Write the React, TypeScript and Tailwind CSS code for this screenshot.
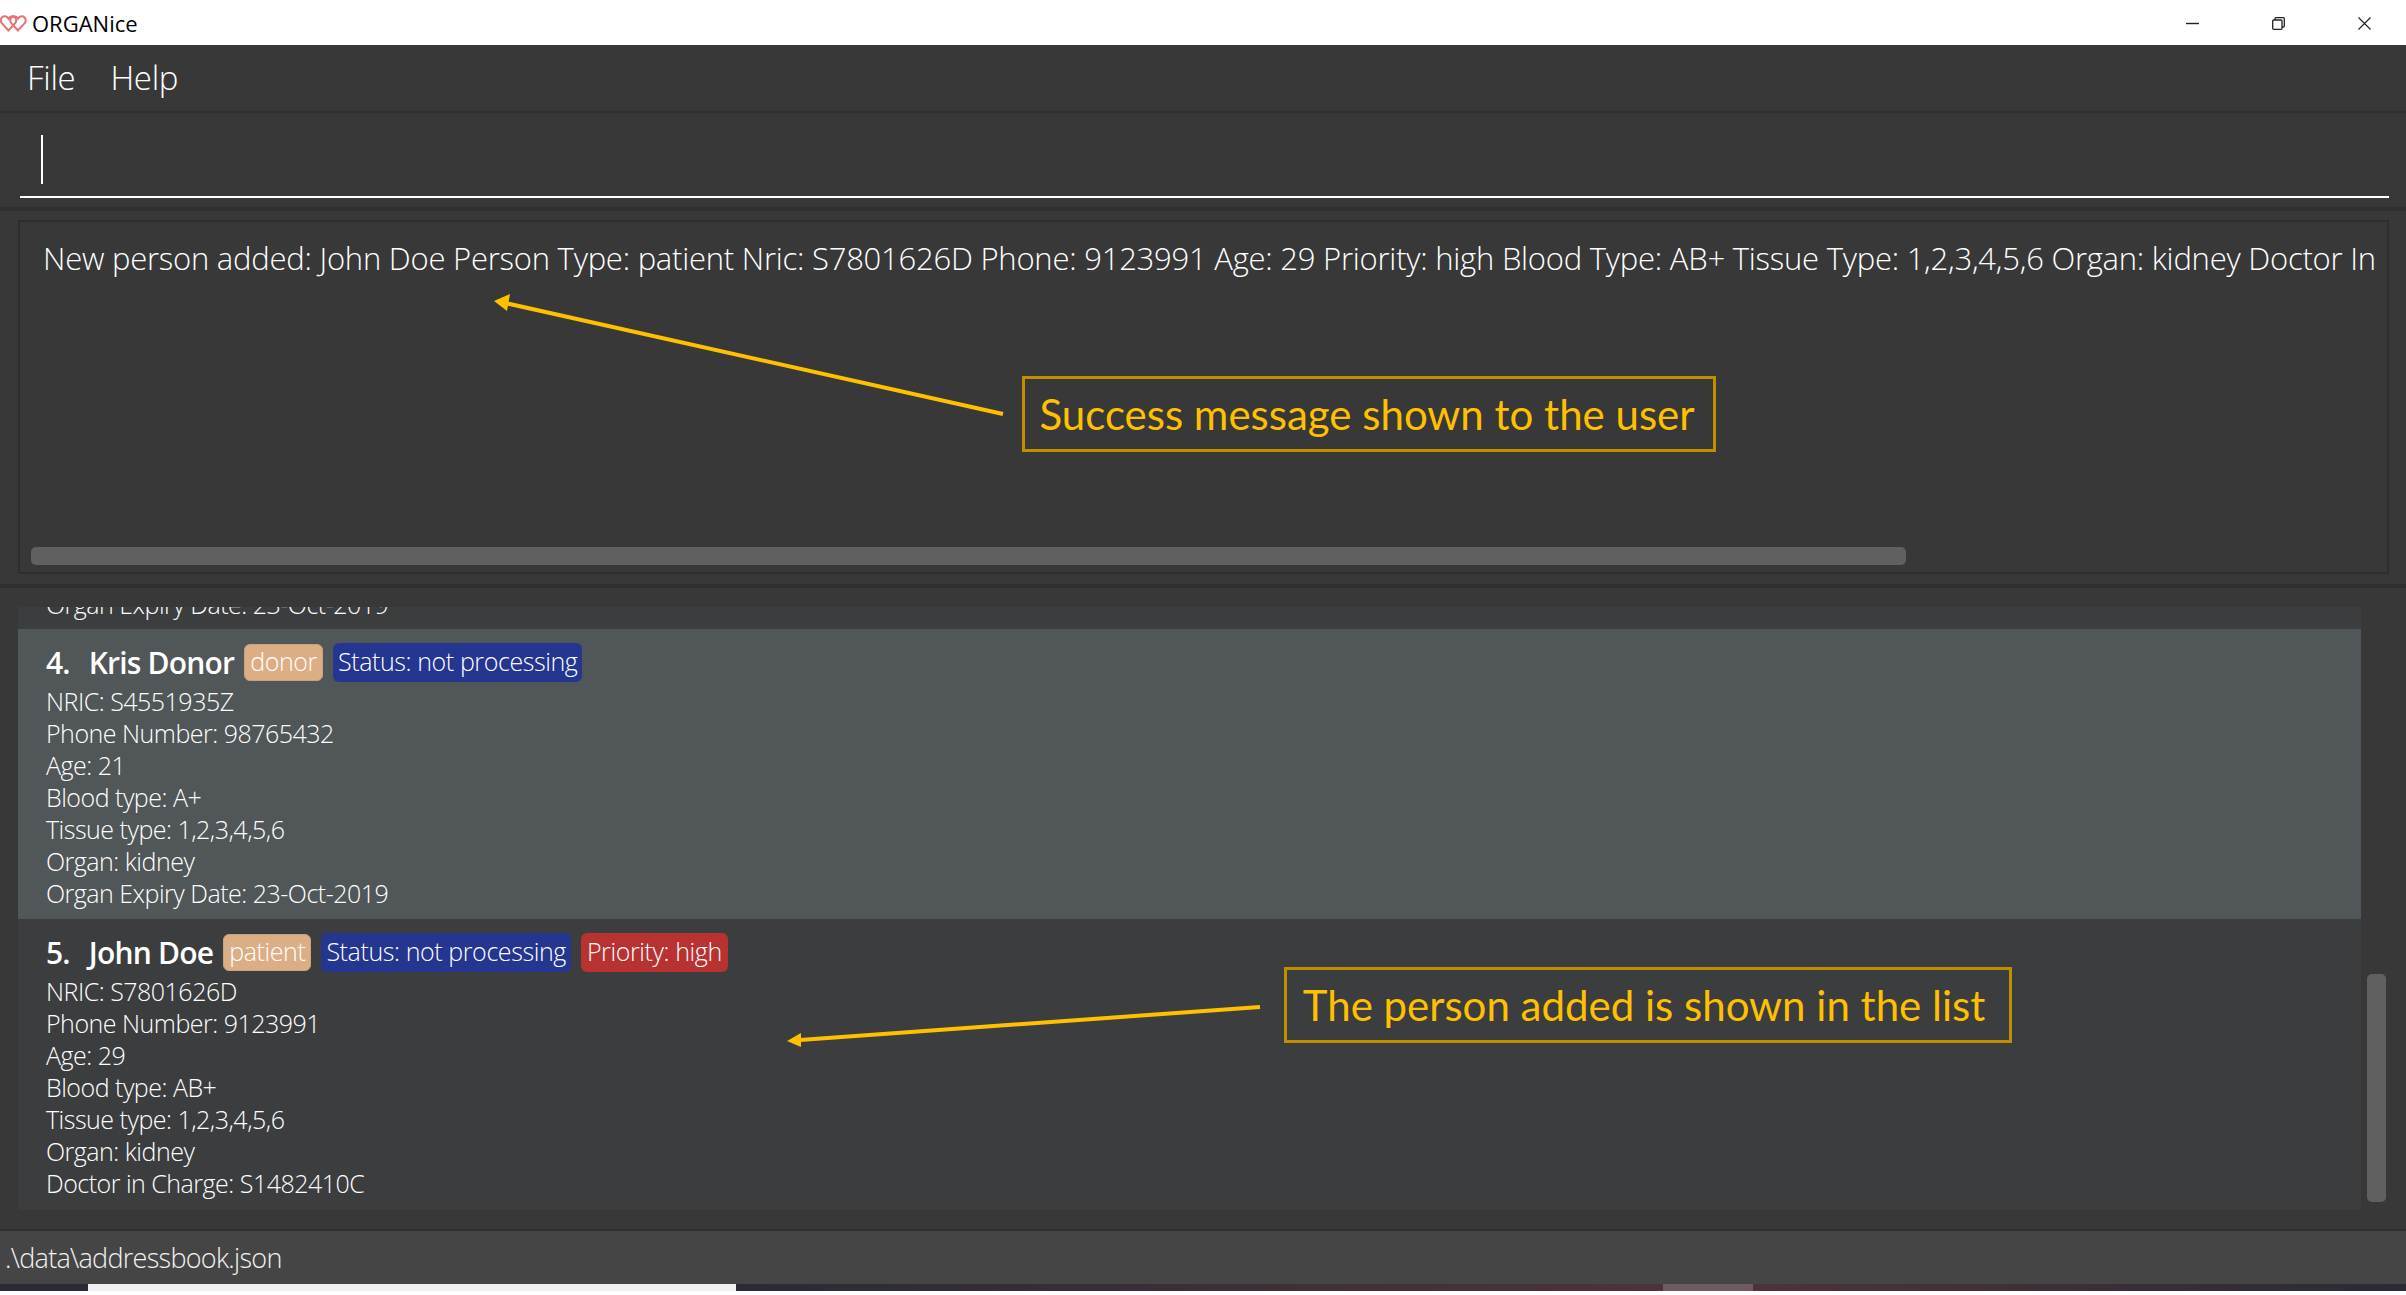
const uiFont = "font-['Open_Sans',sans-serif]"

type Person = {
  index: number
  name: string
  type: string
  priority?: string
  details: string[]
  selected?: boolean
}

const people: Person[] = [
  {
    index: 4,
    name: 'Kris Donor',
    type: 'donor',
    selected: true,
    details: [
      'NRIC: S4551935Z',
      'Phone Number: 98765432',
      'Age: 21',
      'Blood type: A+',
      'Tissue type: 1,2,3,4,5,6',
      'Organ: kidney',
      'Organ Expiry Date: 23-Oct-2019',
    ],
  },
  {
    index: 5,
    name: 'John Doe',
    type: 'patient',
    priority: 'Priority: high',
    details: [
      'NRIC: S7801626D',
      'Phone Number: 9123991',
      'Age: 29',
      'Blood type: AB+',
      'Tissue type: 1,2,3,4,5,6',
      'Organ: kidney',
      'Doctor in Charge: S1482410C',
    ],
  },
]

function Hearts() {
  return (
    <svg width="27" height="17" viewBox="0 0 27 17" fill="none" stroke="#e57373" strokeWidth="2" className="mt-[2px] shrink-0">
      <path d="M8.5 15.5 1.8 8.2C-.2 5.8 1 1.5 4.6 1.3c1.8-.1 3.1.9 3.9 2.4.8-1.5 2.100-2.500 3.900-2.400 3.600.2 4.800 4.500 2.800 6.900z" />
      <path d="M18 15.500 11.300 8.200C9.300 5.800 10.500 1.500 14.100 1.300c1.800-.1 3.100.9 3.900 2.400.8-1.500 2.100-2.500 3.900-2.400 3.600.2 4.800 4.500 2.800 6.900z" />
    </svg>
  )
}

function TitleBar() {
  return (
    <div className="flex h-[45px] shrink-0 items-center bg-white text-black">
      <Hearts />
      <span className="ml-[5px] pt-[2px] font-['Open_Sans',sans-serif] text-[22px]">ORGANice</span>
      <div className="ml-auto flex items-center pr-[35px] pt-[1px]">
        <svg width="13" height="13" viewBox="0 0 13 13" stroke="#222" strokeWidth="1.4" fill="none">
          <path d="M0 6.500h13" />
        </svg>
        <svg width="13" height="13" viewBox="0 0 13 13" stroke="#222" strokeWidth="1.3" fill="none" className="ml-[73px]">
          <rect x="0.700" y="3" width="9.300" height="9.300" rx="1" />
          <path d="M3 3V1.700q0-1 1-1h7.300q1 0 1 1V9q0 1-1 1H10" />
        </svg>
        <svg width="13" height="13" viewBox="0 0 13 13" stroke="#222" strokeWidth="1.2" fill="none" className="ml-[73px]">
          <path d="M.5.500l12 12M12.500.500l-12 12" />
        </svg>
      </div>
    </div>
  )
}

function Badge({ text, className }: { text: string; className: string }) {
  return (
    <span className={`flex items-center rounded-[6px] text-[25px] font-light tracking-[-0.4px] text-white ${className}`}>
      {text}
    </span>
  )
}

function PersonCard({ person }: { person: Person }) {
  return (
    <div className={`pl-[28px] pt-[13px] ${person.selected ? 'h-[290px] bg-[#515658]' : 'h-[291px] bg-[#3c3d3f]'}`}>
      <div className="flex h-[40px] items-center">
        <span className="text-[30px] font-semibold tracking-[-0.8px] text-white">
          <span className="mr-[5px]">{person.index}.&nbsp;&nbsp;</span>
          {person.name}
        </span>
        <Badge text={person.type} className="ml-[10px] h-[37px] border border-[#c9a27f] bg-[#dcae85] px-[5px] text-[#f7ede3]" />
        <Badge text="Status: not processing" className="ml-[10px] h-[39px] bg-[#24368f] px-[5px]" />
        {person.priority && <Badge text={person.priority} className="ml-[10px] h-[39px] bg-[#b83232] px-[6px]" />}
      </div>
      <div className="mt-[3px]">
        {person.details.map((line) => (
          <div key={line} className="h-[32px] text-[25px] font-light leading-[32px] tracking-[-0.5px] text-white">
            {line}
          </div>
        ))}
      </div>
    </div>
  )
}

function Annotations() {
  return (
    <>
      <svg className="pointer-events-none absolute inset-0" width="2406" height="1295" fill="none">
        <path d="M1003 414 505 303" stroke="#ffc000" strokeWidth="4" />
        <path d="M494 301 510 294 507 311z" fill="#ffc000" />
        <path d="M1260 1007 800 1040" stroke="#ffc000" strokeWidth="4" />
        <path d="M787 1041 801 1033 801 1047z" fill="#ffc000" />
      </svg>
      <div className="absolute left-[1022px] top-[376px] flex h-[76px] w-[694px] items-center justify-center border-[3px] border-[#bf8f00] pr-[4px] font-['Lato',sans-serif] text-[42px] text-[#ffc000]">
        Success message shown to the user
      </div>
      <div className="absolute left-[1284px] top-[967px] flex h-[76px] w-[728px] items-center justify-center border-[3px] border-[#bf8f00] pr-[8px] font-['Lato',sans-serif] text-[42px] text-[#ffc000]">
        The person added is shown in the list
      </div>
    </>
  )
}

export default function App() {
  return (
    <div className={`relative flex h-screen w-full flex-col overflow-hidden bg-white ${uiFont}`}>
      <TitleBar />

      <div className="flex h-[68px] shrink-0 items-center gap-[35px] border-b-2 border-[#2f2f2f] bg-[#383838] pl-[27px] text-[33px] font-light tracking-[-0.3px] text-white">
        <span>File</span>
        <span>Help</span>
      </div>

      <div className="h-[94px] shrink-0 bg-[#383838] pl-[20px] pr-[17px] pt-[22px]">
        <div className="h-[63px] border-b-2 border-white pl-[21px]">
          <div className="h-[49px] w-[2px] bg-white" />
        </div>
      </div>

      <div className="h-[381px] shrink-0 border-y-4 border-[#2f2f2f] bg-[#383838] pb-[10px] pl-[18px] pr-[17px] pt-[9px]">
        <div className="flex h-full flex-col overflow-hidden border-2 border-[#2e2e2e]">
          <div className="mt-[16px] whitespace-nowrap pl-[23px] text-[31px] font-light leading-[40px] tracking-[-0.23px] text-white">
            New person added: John Doe Person Type: patient Nric: S7801626D Phone: 9123991 Age: 29 Priority: high Blood Type: AB+ Tissue Type: 1,2,3,4,5,6 Organ: kidney Doctor In
          </div>
          <div className="mb-[7px] ml-[11px] mt-auto h-[18px] w-[1875px] rounded-[5px] bg-[#606060]" />
        </div>
      </div>

      <div className="flex min-h-0 flex-1 border-b-2 border-[#2f2f2f] bg-[#383838]">
        <div className="ml-[18px] mt-[19px] w-[2343px] overflow-hidden">
          <div className="flex h-[22px] items-end overflow-hidden bg-[#3c3d3f] pb-[9px] pl-[28px] text-[25px] font-light leading-[32px] tracking-[-0.5px] text-white">
            <span className="shrink-0">Organ Expiry Date: 23-Oct-2019</span>
          </div>
          {people.map((person) => (
            <PersonCard key={person.index} person={person} />
          ))}
        </div>
        <div className="ml-[6px] pt-[386px]">
          <div className="h-[228px] w-[19px] rounded-[5px] bg-[#606060]" />
        </div>
      </div>

      <div className="h-[53px] shrink-0 bg-[#454545] pl-[5px] pt-[7px] text-[27px] font-light leading-[40px] tracking-[-0.72px] text-[#f2f2f2]">
        .\data\addressbook.json
      </div>

      <div className="flex h-[7px] shrink-0 bg-[#2a2a35]">
        <div className="ml-[88px] w-[648px] bg-[#f0f0f0]" />
        <div className="w-[927px] bg-gradient-to-r from-[#2a2a35] to-[#4d3339]" />
        <div className="w-[90px] bg-[#6e5a60]" />
        <div className="flex-1 bg-gradient-to-r from-[#4d3339] to-[#2a2a35]" />
      </div>
      <div className="h-[4px] shrink-0 bg-white" />

      <Annotations />
    </div>
  )
}
